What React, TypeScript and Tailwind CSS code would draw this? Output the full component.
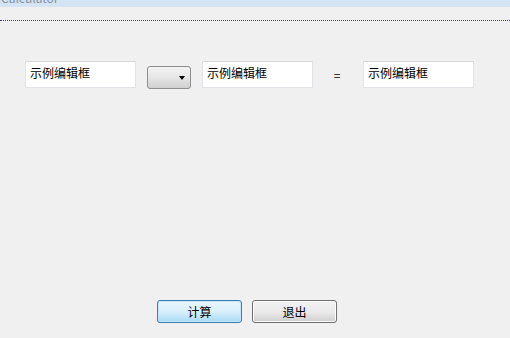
import React from 'react';

const EditBox: React.FC<{ className?: string }> = ({ className = '' }) => (
  <div
    className={`h-[27px] w-[111px] bg-white border border-[#e2e3e6] border-t-[#d5d6d9] pl-[4px] pt-[3px] text-[12px] leading-[16px] text-black ${className}`}
  >
    示例编辑框
  </div>
);

const App: React.FC = () => {
  return (
    <div
      className="w-[510px] h-[338px] bg-[#f0f0f0] flex flex-col overflow-hidden"
      style={{ fontFamily: '"Noto Sans CJK SC", "Liberation Sans", sans-serif' }}
    >
      {/* title strip (cut off) */}
      <div className="h-[7px] bg-[#d5e4f3] overflow-hidden">
        <div className="-mt-[9px] ml-[1px] text-[12px] leading-[14px] text-[#8391a0]">Calculator</div>
      </div>
      <div className="h-[13px]" />
      <div className="h-px border-t border-dotted border-[#3f3396]" />

      {/* expression row */}
      <div className="flex items-start mt-[40px] pl-[25px]">
        <EditBox />
        <div className="ml-[11px] mt-[5px] h-[23px] w-[44px] rounded-[3px] border border-[#8e8f8f] bg-gradient-to-b from-[#f3f3f3] via-[#e6e6e6] to-[#d0d0d0] flex items-center justify-end pr-[5px] pt-[1px]">
          <div className="w-0 h-0 border-l-[3.5px] border-r-[3.5px] border-t-[4px] border-l-transparent border-r-transparent border-t-black" />
        </div>
        <EditBox className="ml-[11px] h-[26px]" />
        <div className="ml-[9px] w-[30px] mt-[6px] text-[12px] leading-[16px] text-black text-center">=</div>
        <EditBox className="ml-[11px]" />
      </div>

      <div className="flex-1" />

      {/* buttons */}
      <div className="flex pl-[157px] gap-[10px] mb-[15px]">
        <button className="h-[23px] w-[85px] rounded-[3px] border border-[#3c7fb1] bg-gradient-to-b from-[#eaf6fd] via-[#d9f0fc] to-[#a7d9f5] text-[12px] leading-[16px] text-black shadow-[inset_0_0_0_1px_#c4e5f6]">
          计算
        </button>
        <button className="h-[23px] w-[85px] rounded-[3px] border border-[#707070] bg-gradient-to-b from-[#f2f2f2] via-[#ebebeb] to-[#cfcfcf] text-[12px] leading-[16px] text-black shadow-[inset_0_0_0_1px_#fcfcfc]">
          退出
        </button>
      </div>
    </div>
  );
};

export default App;
